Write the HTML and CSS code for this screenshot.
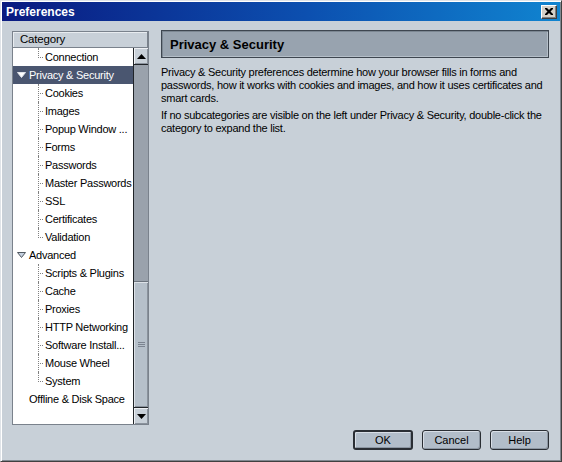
FILE: index.html
```html
<!DOCTYPE html>
<html>
<head>
<meta charset="utf-8">
<link rel="stylesheet" href="styles.css">
</head>
<body>
<div class="window">
  <div class="titlebar">
    <span class="title">Preferences</span>
    <span class="close"><svg width="8" height="7" viewBox="0 0 8 7"><path d="M0 0h2l2 2 2-2h2v1l-2.5 2.5L8 6v1H6L4 5 2 7H0V6l2.5-2.5L0 1z" fill="#000"/></svg></span>
  </div>
  <div class="main">
    <div class="tree">
      <div class="tree-head">Category</div>
      <div class="tree-body">
        <div class="list">
          <div class="row child"><span class="twig last"></span>Connection</div>
          <div class="row parent selected"><svg class="arrow" width="9" height="6" viewBox="0 0 9 6"><path d="M0.5 0.5h8L4.5 5.5z" fill="#fff" stroke="#e0e4ea"/></svg>Privacy &amp; Security</div>
          <div class="row child"><span class="twig"></span>Cookies</div>
          <div class="row child"><span class="twig"></span>Images</div>
          <div class="row child"><span class="twig"></span>Popup Window ...</div>
          <div class="row child"><span class="twig"></span>Forms</div>
          <div class="row child"><span class="twig"></span>Passwords</div>
          <div class="row child"><span class="twig"></span>Master Passwords</div>
          <div class="row child"><span class="twig"></span>SSL</div>
          <div class="row child"><span class="twig"></span>Certificates</div>
          <div class="row child"><span class="twig last"></span>Validation</div>
          <div class="row parent"><svg class="arrow" width="9" height="6" viewBox="0 0 9 6"><path d="M0.5 0.5h8L4.5 5.5z" fill="#c4d0e0" stroke="#505860"/></svg>Advanced</div>
          <div class="row child"><span class="twig"></span>Scripts &amp; Plugins</div>
          <div class="row child"><span class="twig"></span>Cache</div>
          <div class="row child"><span class="twig"></span>Proxies</div>
          <div class="row child"><span class="twig"></span>HTTP Networking</div>
          <div class="row child"><span class="twig"></span>Software Install...</div>
          <div class="row child"><span class="twig"></span>Mouse Wheel</div>
          <div class="row child"><span class="twig last"></span>System</div>
          <div class="row parent noarrow">Offline &amp; Disk Space</div>
        </div>
        <div class="scrollbar">
          <div class="sb-btn"><svg width="9" height="5" viewBox="0 0 9 5"><path d="M4.5 0L9 5H0z" fill="#000"/></svg></div>
          <div class="sb-track"><div class="sb-thumb"><span class="grip"></span></div></div>
          <div class="sb-btn"><svg width="9" height="5" viewBox="0 0 9 5"><path d="M0 0h9L4.5 5z" fill="#000"/></svg></div>
        </div>
      </div>
    </div>
    <div class="panel">
      <div class="panel-head">Privacy &amp; Security</div>
      <p class="desc">Privacy &amp; Security preferences determine how your browser fills in forms and passwords, how it works with cookies and images, and how it uses certificates and smart cards.</p>
      <p class="desc second">If no subcategories are visible on the left under Privacy &amp; Security, double-click the category to expand the list.</p>
      <div class="buttons">
        <button class="btn default">OK</button>
        <button class="btn">Cancel</button>
        <button class="btn">Help</button>
      </div>
    </div>
  </div>
</div>
</body>
</html>
```
FILE: styles.css
```css
html, body {
  margin: 0;
  padding: 0;
  background: #c8d0d8;
}
.window {
  box-sizing: border-box;
  width: 562px;
  height: 462px;
  background: #c8d0d8;
  border: 1px solid;
  border-color: #dfe3e8 #404040 #404040 #dfe3e8;
  box-shadow: inset 1px 1px 0 #ffffff, inset -1px -1px 0 #808890;
  padding: 1px;
  display: flex;
  flex-direction: column;
  font-family: "Liberation Sans", Arial, sans-serif;
  font-size: 11px;
  color: #000;
}
.titlebar {
  height: 19px;
  background: linear-gradient(90deg, #0a1a80 0%, #0c50b0 55%, #1084d0 100%);
  display: flex;
  align-items: center;
  justify-content: space-between;
  padding: 0 3px 0 4px;
  flex: none;
}
.title {
  color: #fff;
  font-weight: bold;
  font-size: 12px;
}
.close {
  box-sizing: border-box;
  width: 16px;
  height: 14px;
  background: #d4d0c8;
  border: 1px solid;
  border-color: #ffffff #404040 #404040 #ffffff;
  box-shadow: inset -1px -1px 0 #808080;
  display: flex;
  align-items: center;
  justify-content: center;
}
.main {
  flex: 1;
  display: flex;
  gap: 12px;
  padding: 10px 11px 10px 10px;
  min-height: 0;
}
.tree {
  box-sizing: border-box;
  width: 137px;
  height: 394px;
  flex: none;
  border: 1px solid #7a828c;
  display: flex;
  flex-direction: column;
  background: #fff;
  overflow: hidden;
}
.tree-head {
  box-sizing: border-box;
  height: 16px;
  background: #c8d0d8;
  border-right: 1px solid #7a828c;
  border-bottom: 1px solid #7a828c;
  box-shadow: inset 1px 1px 0 #e8ecf0;
  padding-left: 7px;
  line-height: 15px;
  font-size: 11.5px;
  letter-spacing: -0.2px;
}
.tree-body {
  flex: 1;
  display: flex;
  min-height: 0;
  min-width: 0;
}
.list {
  flex: 1;
  min-width: 0;
  overflow: hidden;
  background: #fff;
}
.row {
  height: 18px;
  display: flex;
  align-items: center;
  white-space: nowrap;
  font-size: 11px;
  letter-spacing: -0.25px;
}
.row.child {
  padding-left: 25px;
}
.row.parent {
  padding-left: 4px;
}
.row.noarrow {
  padding-left: 16px;
}
.row.selected {
  background: #4a5670;
  color: #fff;
}
.arrow {
  margin-right: 3px;
  flex: none;
}
.twig {
  flex: none;
  align-self: stretch;
  width: 5px;
  margin-right: 1px;
  border-left: 1px dotted #808080;
  background: repeating-linear-gradient(90deg, #808080 0 1px, transparent 1px 2px) no-repeat 1px 9px / 5px 1px;
}
.twig.last {
  align-self: flex-start;
  height: 10px;
  background-position: 1px 9px;
}
.scrollbar {
  box-sizing: border-box;
  width: 15px;
  flex: none;
  display: flex;
  flex-direction: column;
  background: #9aa2ac;
  border-left: 1px solid #202428;
}
.sb-btn {
  box-sizing: border-box;
  height: 17px;
  background: #c8d0d8;
  border-bottom: 1px solid #202428;
  box-shadow: inset 1px 1px 0 #eef0f4, inset -1px -1px 0 #8a929c;
  display: flex;
  align-items: center;
  justify-content: center;
  flex: none;
}
.sb-btn:last-child {
  border-bottom: none;
  border-top: 1px solid #202428;
}
.sb-track {
  flex: 1;
  display: flex;
  flex-direction: column;
  justify-content: flex-end;
}
.sb-thumb {
  box-sizing: border-box;
  height: 126px;
  background: #b6c0ca;
  border-top: 1px solid #6c747e;
  box-shadow: inset 1px 1px 0 #dde2e8, inset -1px -1px 0 #8a929c;
  display: flex;
  align-items: center;
  justify-content: center;
}
.grip {
  width: 7px;
  height: 5px;
  background: repeating-linear-gradient(180deg, #7c8490 0 1px, transparent 1px 2px);
}
.panel {
  flex: 1;
  display: flex;
  flex-direction: column;
  min-width: 0;
}
.panel-head {
  box-sizing: border-box;
  height: 28px;
  margin-top: -1px;
  background: #98a3af;
  border: 1px solid #3e4650;
  box-shadow: inset 1px 1px 0 #7c8792, inset -1px -1px 0 #b4bec8;
  font-weight: bold;
  font-size: 13px;
  padding-left: 8px;
  display: flex;
  align-items: center;
  flex: none;
}
.desc {
  margin: 8px 0 0 0;
  line-height: 13px;
  font-size: 11px;
  letter-spacing: -0.25px;
}
.desc.second {
  margin-top: 4px;
}
.buttons {
  margin-top: auto;
  display: flex;
  justify-content: flex-end;
  gap: 9px;
}
.btn {
  box-sizing: border-box;
  width: 59px;
  height: 20px;
  padding: 0;
  font-family: "Liberation Sans", Arial, sans-serif;
  font-size: 11px;
  color: #000;
  background: #b2bdc9;
  border: 1px solid #2a2e34;
  border-radius: 3px;
  box-shadow: inset 1px 1px 0 #d8dee6, inset -1px -1px 0 #8c96a2;
}
.btn.default {
  border-width: 2px;
  width: 60px;
}
```
